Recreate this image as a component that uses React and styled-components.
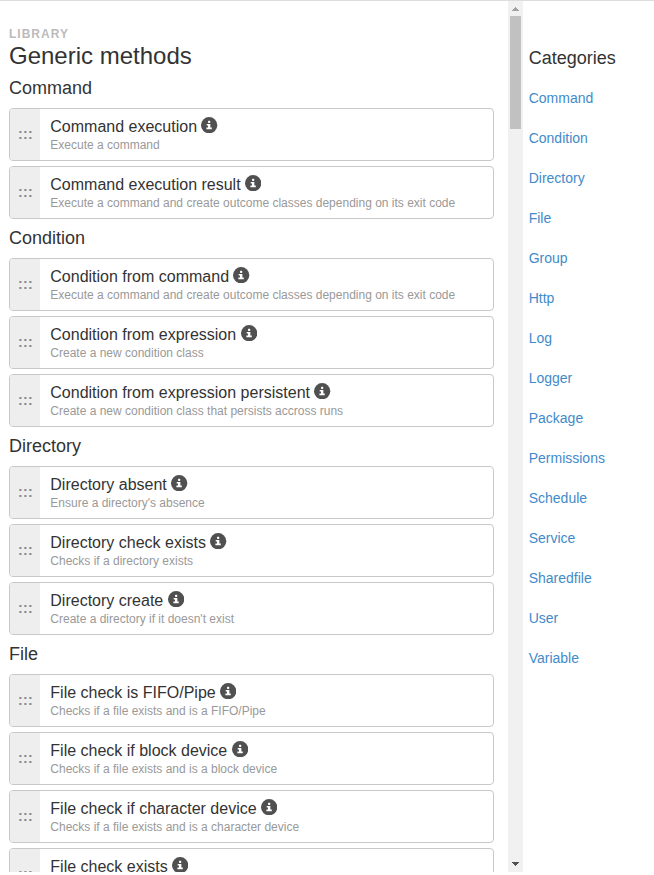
import React from 'react';
import styled, { createGlobalStyle } from 'styled-components';

const GlobalStyle = createGlobalStyle`
  * { box-sizing: border-box; }
  html, body { margin: 0; background: #fff; overflow: hidden; }
  body { font-family: "Liberation Sans", Arial, sans-serif; color: #333; }
`;

const Page = styled.div`
  display: flex;
  height: 872px;
  border-top: 1px solid #ddd;
  background: #fff;
  overflow: hidden;
`;

const Library = styled.main`
  width: 508px;
  flex: none;
  padding: 26px 14px 0 9px;
  overflow: hidden;
`;

const Eyebrow = styled.div`
  height: 15px;
  line-height: 15px;
  font-size: 12px;
  font-weight: bold;
  letter-spacing: 1px;
  color: #bbb;
`;

const Title = styled.h1`
  margin: 0 0 -1px;
  height: 28px;
  line-height: 28px;
  font-size: 24px;
  font-weight: normal;
`;

const GroupTitle = styled.h2`
  margin: 0;
  height: 39px;
  line-height: 39px;
  font-size: 18px;
  font-weight: normal;
`;

const MethodList = styled.ul`
  margin: 0;
  padding: 0;
  list-style: none;
  display: flex;
  flex-direction: column;
  gap: 5px;
`;

const Method = styled.li`
  display: flex;
  height: 53px;
  border: 1px solid #c8c8c8;
  border-radius: 4px;
  overflow: hidden;
`;

const Handle = styled.div`
  width: 30px;
  flex: none;
  display: flex;
  align-items: center;
  justify-content: center;
  padding: 0 0 2px 1px;
  background: #eee;
  color: #888;
  font-size: 14px;
  font-weight: bold;
  letter-spacing: 0.3px;
`;

const MethodBody = styled.div`
  padding: 8px 0 0 10.3px;
`;

const MethodName = styled.div`
  display: flex;
  height: 21px;
  line-height: 20px;
  font-size: 16px;
  white-space: nowrap;
`;

const InfoSvg = styled.svg`
  width: 16.3px;
  height: 16.3px;
  margin-left: 4.45px;
`;

const Description = styled.div`
  height: 15px;
  line-height: 15px;
  font-size: 12px;
  color: #999;
`;

const Scrollbar = styled.div`
  width: 15px;
  flex: none;
  display: flex;
  flex-direction: column;
  align-items: center;
  background: #f1f1f1;
`;

const ScrollButton = styled.svg`
  width: 15px;
  height: 15px;
  flex: none;
  fill: ${(p) => p.$color};
`;

const Thumb = styled.div`
  width: 11px;
  height: 113px;
  background: #c1c1c1;
`;

const Spacer = styled.div`
  flex: 1;
`;

const Categories = styled.nav`
  flex: 1;
  padding: 47px 0 0 5.7px;
`;

const CategoriesTitle = styled.h2`
  margin: 0 0 10px;
  height: 20px;
  line-height: 20px;
  font-size: 18px;
  font-weight: normal;
`;

const CategoryLink = styled.a`
  display: block;
  height: 40px;
  line-height: 40px;
  font-size: 14px;
  color: #428bca;
`;

const groups = [
  ['Command', [
    ['Command execution', 'Execute a command'],
    ['Command execution result', 'Execute a command and create outcome classes depending on its exit code'],
  ]],
  ['Condition', [
    ['Condition from command', 'Execute a command and create outcome classes depending on its exit code'],
    ['Condition from expression', 'Create a new condition class'],
    ['Condition from expression persistent', 'Create a new condition class that persists accross runs'],
  ]],
  ['Directory', [
    ['Directory absent', "Ensure a directory's absence"],
    ['Directory check exists', 'Checks if a directory exists'],
    ['Directory create', "Create a directory if it doesn't exist"],
  ]],
  ['File', [
    ['File check is FIFO/Pipe', 'Checks if a file exists and is a FIFO/Pipe'],
    ['File check if block device', 'Checks if a file exists and is a block device'],
    ['File check if character device', 'Checks if a file exists and is a character device'],
    ['File check exists'],
  ]],
];

const categories = [
  'Command', 'Condition', 'Directory', 'File', 'Group', 'Http', 'Log', 'Logger',
  'Package', 'Permissions', 'Schedule', 'Service', 'Sharedfile', 'User', 'Variable',
];

function InfoIcon() {
  return (
    <InfoSvg viewBox="0 0 16 16" aria-hidden="true">
      <circle cx="8" cy="8" r="8" fill="#505050" />
      <rect x="6.9" y="3.8" width="2.2" height="2" rx="0.6" fill="#fff" />
      <path d="M5.6 6.8h3.6v3.6h1.4V12H5.3v-1.6h1.6V8.3H5.6z" fill="#fff" />
    </InfoSvg>
  );
}

export default function App() {
  return (
    <>
      <GlobalStyle />
      <Page>
        <Library>
          <Eyebrow>LIBRARY</Eyebrow>
          <Title>Generic methods</Title>
          {groups.map(([name, methods]) => (
            <section key={name}>
              <GroupTitle>{name}</GroupTitle>
              <MethodList>
                {methods.map(([method, description]) => (
                  <Method key={method}>
                    <Handle>:::</Handle>
                    <MethodBody>
                      <MethodName>{method}<InfoIcon /></MethodName>
                      {description && <Description>{description}</Description>}
                    </MethodBody>
                  </Method>
                ))}
              </MethodList>
            </section>
          ))}
        </Library>
        <Scrollbar>
          <ScrollButton $color="#a3a3a3" viewBox="0 0 15 15" shapeRendering="crispEdges">
            <path d="M7 6h1v1h1v1h1v1h1v1H4V9h1V8h1V7h1z" />
          </ScrollButton>
          <Thumb />
          <Spacer />
          <ScrollButton $color="#505050" viewBox="0 0 15 15" shapeRendering="crispEdges">
            <path d="M4 5h7v1h-1v1H9v1H8v1H7V8H6V7H5V6H4z" />
          </ScrollButton>
        </Scrollbar>
        <Categories>
          <CategoriesTitle>Categories</CategoriesTitle>
          {categories.map((name) => (
            <CategoryLink key={name}>{name}</CategoryLink>
          ))}
        </Categories>
      </Page>
    </>
  );
}
